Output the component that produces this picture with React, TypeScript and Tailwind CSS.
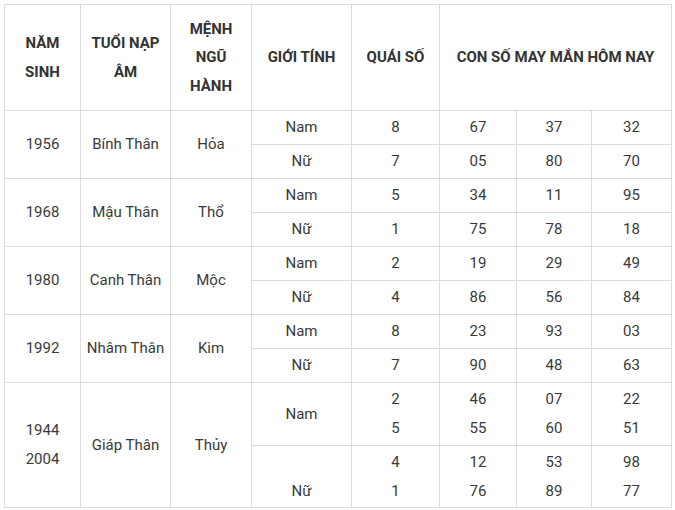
const rows = [
  { year: ['1956'], tuoi: 'Bính Thân', menh: 'Hỏa', sub: [
    { g: ['Nam'], q: ['8'], n: [['67'], ['37'], ['32']] },
    { g: ['Nữ'], q: ['7'], n: [['05'], ['80'], ['70']] },
  ] },
  { year: ['1968'], tuoi: 'Mậu Thân', menh: 'Thổ', sub: [
    { g: ['Nam'], q: ['5'], n: [['34'], ['11'], ['95']] },
    { g: ['Nữ'], q: ['1'], n: [['75'], ['78'], ['18']] },
  ] },
  { year: ['1980'], tuoi: 'Canh Thân', menh: 'Mộc', sub: [
    { g: ['Nam'], q: ['2'], n: [['19'], ['29'], ['49']] },
    { g: ['Nữ'], q: ['4'], n: [['86'], ['56'], ['84']] },
  ] },
  { year: ['1992'], tuoi: 'Nhâm Thân', menh: 'Kim', sub: [
    { g: ['Nam'], q: ['8'], n: [['23'], ['93'], ['03']] },
    { g: ['Nữ'], q: ['7'], n: [['90'], ['48'], ['63']] },
  ] },
  { year: ['1944', '2004'], tuoi: 'Giáp Thân', menh: 'Thủy', sub: [
    { g: ['Nam'], q: ['2', '5'], n: [['46', '55'], ['07', '60'], ['22', '51']] },
    { g: ['', 'Nữ'], q: ['4', '1'], n: [['12', '76'], ['53', '89'], ['98', '77']] },
  ] },
];

function Lines({ items }: { items: string[] }) {
  return (
    <>
      {items.map((t, i) => (
        <div key={i} className="h-[29px]">{t || '\u00a0'}</div>
      ))}
    </>
  );
}

const th = 'border border-[#dcdcdc] text-center align-middle font-bold text-[15px] leading-[28.5px] text-[#333]';
const td = 'border border-[#dcdcdc] text-center align-middle text-[15px] leading-[29px] text-[#3a3a3a] p-0';

export default function App() {
  return (
    <div className="w-[675px] h-[510px] bg-white pt-[4px] pl-[4px] overflow-hidden" style={{ fontFamily: 'Roboto, "Liberation Sans", sans-serif' }}>
      <table className="table-fixed border-collapse w-[667px]">
        <colgroup>
          <col className="w-[76px]" />
          <col className="w-[90px]" />
          <col className="w-[81px]" />
          <col className="w-[100px]" />
          <col className="w-[88px]" />
          <col className="w-[77px]" />
          <col className="w-[75px]" />
          <col className="w-[80px]" />
        </colgroup>
        <thead>
          <tr className="h-[106px]">
            <th className={th}>NĂM<br />SINH</th>
            <th className={th}>TUỔI NẠP<br />ÂM</th>
            <th className={th}>MỆNH<br />NGŨ<br />HÀNH</th>
            <th className={th}>GIỚI TÍNH</th>
            <th className={th}>QUÁI SỐ</th>
            <th className={th} colSpan={3}>CON SỐ MAY MẮN HÔM NAY</th>
          </tr>
        </thead>
        <tbody>
          {rows.map((r) =>
            r.sub.map((s, i) => (
              <tr key={r.year[0] + i} className={s.q.length > 1 ? (i === 0 ? 'h-[63px]' : 'h-[62px]') : 'h-[34px]'}>
                {i === 0 && (
                  <>
                    <td className={td} rowSpan={2}><Lines items={r.year} /></td>
                    <td className={td} rowSpan={2}>{r.tuoi}</td>
                    <td className={td} rowSpan={2}>{r.menh}</td>
                  </>
                )}
                <td className={td}><Lines items={s.g} /></td>
                <td className={td}><Lines items={s.q} /></td>
                {s.n.map((n, j) => (
                  <td key={j} className={td}><Lines items={n} /></td>
                ))}
              </tr>
            ))
          )}
        </tbody>
      </table>
    </div>
  );
}
